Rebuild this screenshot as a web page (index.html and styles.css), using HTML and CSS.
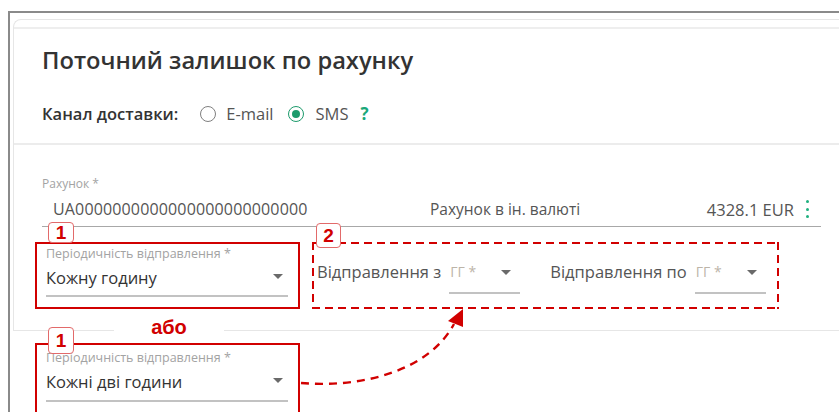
FILE: index.html
```html
<!DOCTYPE html>
<html lang="uk">
<head>
<meta charset="utf-8">
<title>Поточний залишок по рахунку</title>
<link rel="stylesheet" href="styles.css">
</head>
<body>
<div class="frame">
  <div class="card">
    <div class="card-edge"></div>
    <div class="head">
      <h1 class="title">Поточний залишок по рахунку</h1>
      <div class="channel">
        <span class="channel-label">Канал доставки:</span>
        <label class="radio"><span class="dot"></span>E-mail</label>
        <label class="radio on"><span class="dot"></span>SMS</label>
        <span class="help">?</span>
      </div>
    </div>
    <div class="form">
      <div class="acct">
        <div class="lbl">Рахунок *</div>
        <div class="acct-row">
          <span class="acct-num">UA0000000000000000000000000</span>
          <span class="acct-type">Рахунок в ін. валюті</span>
          <span class="acct-sum">4328.1 EUR</span>
          <span class="kebab"><i></i><i></i><i></i></span>
        </div>
      </div>
      <div class="boxes">
        <div class="mark solid">
          <span class="badge">1</span>
          <div class="lbl">Періодичність відправлення *</div>
          <div class="select"><span>Кожну годину</span><span class="caret"></span></div>
        </div>
        <div class="mark dashed">
          <span class="badge wide">2</span>
          <span class="send">Відправлення з</span>
          <div class="hh"><span class="ph">ГГ *</span><span class="caret"></span></div>
          <span class="send">Відправлення по</span>
          <div class="hh"><span class="ph">ГГ *</span><span class="caret"></span></div>
        </div>
      </div>
    </div>
    <span class="or">або</span>
  </div>
  <div class="lower">
    <div class="mark solid">
      <span class="badge tall">1</span>
      <div class="lbl">Періодичність відправлення *</div>
      <div class="select"><span>Кожні дві години</span><span class="caret"></span></div>
    </div>
  </div>
</div>
<svg class="link" width="839" height="412" viewBox="0 0 839 412">
  <path d="M301 383 C 360 388, 428 372, 454 324" fill="none" stroke="#d10000" stroke-width="2.4" stroke-dasharray="8 6"/>
  <polygon points="463,309 448,321 463,327" fill="#d10000"/>
</svg>
</body>
</html>
```
FILE: styles.css
```css
html, body {
  margin: 0;
  padding: 0;
  background: #fff;
}
body {
  width: 839px;
  height: 412px;
  overflow: hidden;
  position: relative;
  font-family: "Open Sans", "Liberation Sans", sans-serif;
  color: #333;
}
.frame {
  margin: 11px 0 0 8px;
  border-left: 2px solid #8a8a8a;
  border-top: 2px solid #8a8a8a;
  padding: 6px 0 0 3px;
  height: 420px;
}
.card {
  position: relative;
  border: 1px solid #e6e6e6;
  border-right: none;
  border-radius: 8px 0 0 0;
}
.card-edge {
  height: 7px;
  border-bottom: 2px solid #eeeeee;
}
.head {
  padding: 0 0 0 28px;
  height: 116px;
  border-bottom: 2px solid #ececec;
  box-sizing: border-box;
}
.title {
  margin: 0;
  padding-top: 16px;
  font-size: 23.7px;
  font-weight: 600;
  line-height: 30px;
  color: #333;
}
.channel {
  display: flex;
  align-items: center;
  margin-top: 27px;
  font-size: 16.5px;
  line-height: 24px;
  height: 24px;
}
.channel-label {
  font-weight: 600;
  margin-right: 22px;
}
.radio {
  display: flex;
  align-items: center;
  color: #555;
  margin-right: 14px;
}
.radio .dot {
  width: 16px;
  height: 16px;
  border: 1px solid #808080;
  border-radius: 50%;
  margin-right: 10px;
  box-sizing: border-box;
  display: flex;
  align-items: center;
  justify-content: center;
}
.radio.on .dot {
  border: 1.5px solid #1d9b6c;
  margin-right: 12px;
}
.radio.on .dot::after {
  content: "";
  width: 8px;
  height: 8px;
  border-radius: 50%;
  background: #1d9b6c;
}
.radio.on {
  margin-right: 12px;
}
.help {
  color: #1aa87a;
  font-weight: 700;
  font-size: 17px;
}
.form {
  height: 185px;
}
.lbl {
  font-size: 12.5px;
  color: #a3a3a3;
  line-height: 16px;
}
.acct {
  margin: 0 18px 0 28px;
  padding-top: 31px;
}
.acct .lbl {
  font-size: 12px;
}
.acct-row {
  display: flex;
  align-items: center;
  height: 35px;
  box-sizing: border-box;
  border-bottom: 1px solid #a8a8a8;
  font-size: 16px;
  color: #555;
}
.acct-num {
  padding-left: 11px;
  width: 377px;
  letter-spacing: 0.15px;
}
.acct-type {
  flex: 1;
  font-size: 15.5px;
}
.acct-sum {
  font-size: 16.5px;
  margin-right: 12px;
}
.kebab {
  display: flex;
  flex-direction: column;
  gap: 4.5px;
  width: 15px;
}
.kebab i {
  width: 3px;
  height: 3px;
  border-radius: 50%;
  background: #1fb07f;
}
.boxes {
  display: flex;
  gap: 12px;
  margin: 15px 0 0 21px;
}
.mark {
  position: relative;
  height: 67px;
  box-sizing: border-box;
}
.mark.solid {
  width: 265px;
  border: 2px solid #d10000;
  padding: 2px 10px 0 9px;
}
.mark.dashed {
  width: 467px;
  display: flex;
  align-items: flex-start;
  padding: 2px 10px 2px 5px;
  background:
    repeating-linear-gradient(90deg, #d10000 0 8px, transparent 8px 13px) left top / 100% 2px no-repeat,
    repeating-linear-gradient(90deg, #d10000 0 8px, transparent 8px 13px) left bottom / 100% 2px no-repeat,
    repeating-linear-gradient(180deg, #d10000 0 8px, transparent 8px 13px) left top / 2px 100% no-repeat,
    repeating-linear-gradient(180deg, #d10000 0 8px, transparent 8px 13px) right top / 2px 100% no-repeat;
}
.badge {
  position: absolute;
  left: 11px;
  top: -22px;
  width: 24px;
  height: 19px;
  border: 1px solid #e26a6a;
  border-radius: 4px;
  background: #fff;
  color: #d10000;
  font-family: "Liberation Sans", Arial, sans-serif;
  font-weight: 700;
  font-size: 19px;
  line-height: 20px;
  text-align: center;
}
.badge.wide {
  left: 4px;
  top: -19px;
  width: 23px;
  height: 23px;
  line-height: 24px;
}
.badge.tall {
  top: -18px;
  height: 25px;
  line-height: 26px;
}
.select {
  display: flex;
  align-items: flex-start;
  justify-content: space-between;
  height: 35px;
  padding-top: 5px;
  box-sizing: border-box;
  border-bottom: 2px solid #c2c2c2;
  font-size: 16.5px;
  line-height: 22px;
  color: #333;
}
.caret {
  width: 0;
  height: 0;
  border-left: 5px solid transparent;
  border-right: 5px solid transparent;
  border-top: 5px solid #6a6a6a;
  margin: 7px 5px 0 0;
}
.send {
  font-size: 16.5px;
  line-height: 22px;
  color: #555;
  margin-top: 17px;
}
.hh {
  display: flex;
  align-items: flex-start;
  justify-content: space-between;
  width: 71px;
  height: 33px;
  margin: 17px 0 0 8px;
  border-bottom: 2px solid #c2c2c2;
  box-sizing: border-box;
  padding: 0 4px 0 1px;
}
.hh .caret {
  margin-top: 9px;
}
.hh + .send {
  margin-left: 30px;
}
.ph {
  font-size: 14px;
  line-height: 22px;
  color: #bcb4a8;
}
.or {
  position: absolute;
  left: 100px;
  bottom: -8px;
  width: 110px;
  text-align: center;
  background: #fff;
  color: #d10000;
  font-family: "Liberation Sans", Arial, sans-serif;
  font-weight: 700;
  font-size: 20px;
  line-height: 22px;
}
.lower {
  padding: 12px 0 0 22px;
}
.lower .mark.solid {
  height: 80px;
  padding-top: 5px;
}
.lower .select {
  height: 36px;
}
.link {
  position: absolute;
  left: 0;
  top: 0;
  pointer-events: none;
}
```
